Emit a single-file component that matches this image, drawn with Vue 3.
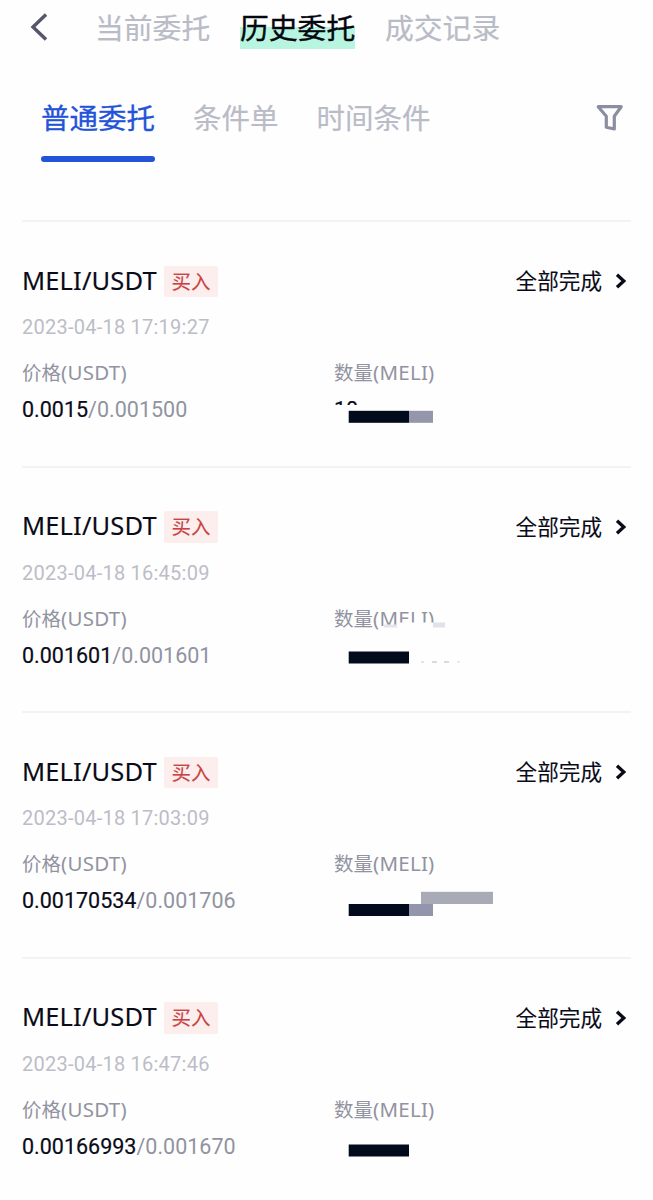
<script setup>
import { ref } from "vue";

const mainTabs = ["当前委托", "历史委托", "成交记录"];
const subTabs = ["普通委托", "条件单", "时间条件"];
const activeMain = ref(1);
const activeSub = ref(0);

// masks: blocks that cover the private amount, relative to the quantity cell
const orders = [
  {
    time: "2023-04-18 17:19:27",
    price: "0.0015",
    avg: "0.001500",
    amount: "10",
    masks: [
      { x: 0, y: 46, w: 110, h: 24, color: "#fefefe" },
      { x: 14.7, y: 51.8, w: 60.3, h: 12, color: "#020b1c" },
      { x: 75, y: 51.8, w: 24, h: 12, color: "#9496ac" },
    ],
  },
  {
    time: "2023-04-18 16:45:09",
    price: "0.001601",
    avg: "0.001601",
    amount: "",
    masks: [
      { x: 50, y: 19.5, w: 13, h: 3, color: "#e4e5ec" },
      { x: 63, y: 17.5, w: 36, h: 8, color: "#fefefe" },
      { x: 99, y: 17.5, w: 12, h: 5, color: "#e0e1e9" },
      { x: 14.7, y: 46.5, w: 60.3, h: 12, color: "#020b1c" },
      { x: 87, y: 56.5, w: 3, h: 1, color: "#c9cad0" },
      { x: 98, y: 56.5, w: 5, h: 1, color: "#b4b5bd" },
      { x: 110, y: 56.5, w: 5, h: 1, color: "#b4b5bd" },
      { x: 123, y: 56.5, w: 3, h: 1, color: "#d4d5da" },
    ],
  },
  {
    time: "2023-04-18 17:03:09",
    price: "0.00170534",
    avg: "0.001706",
    amount: "",
    masks: [
      { x: 87, y: 41.8, w: 72, h: 12.2, color: "#a8aab5" },
      { x: 14.7, y: 54, w: 60.3, h: 12, color: "#020b1c" },
      { x: 75, y: 54, w: 24, h: 12, color: "#9395ad" },
    ],
  },
  {
    time: "2023-04-18 16:47:46",
    price: "0.00166993",
    avg: "0.001670",
    amount: "",
    masks: [{ x: 14.7, y: 48.5, w: 60.3, h: 12, color: "#020b1c" }],
  },
];
</script>

<template>
  <div class="page">
    <header class="header">
      <svg class="back" width="18" height="28" viewBox="0 0 18 28">
        <path d="M17 1.5 L4 14 L17 26.5" />
      </svg>
      <nav class="main-tabs">
        <span
          v-for="(tab, i) in mainTabs"
          :key="tab"
          class="main-tab"
          :class="{ active: activeMain === i }"
          @click="activeMain = i"
          >{{ tab }}</span
        >
      </nav>
    </header>

    <div class="sub-header">
      <nav class="sub-tabs">
        <span
          v-for="(tab, i) in subTabs"
          :key="tab"
          class="sub-tab"
          :class="{ active: activeSub === i }"
          @click="activeSub = i"
          >{{ tab }}<i class="line" v-if="activeSub === i"></i
        ></span>
      </nav>
      <svg class="filter" width="28" height="28" viewBox="0 0 28 28">
        <path d="M3.2 2.7 H26.2 L19.3 12.2 V25 L11.3 23.3 V12.2 Z" />
      </svg>
    </div>

    <div class="list">
      <div class="order" v-for="order in orders" :key="order.time">
        <div class="title">
          <span class="pair">MELI/USDT</span>
          <span class="tag">买入</span>
          <span class="status">全部完成</span>
          <svg class="arrow" width="12" height="16" viewBox="0 0 12 16">
            <path d="M2 1.7 L8.8 8 L2 14.3" />
          </svg>
        </div>
        <div class="time">{{ order.time }}</div>
        <div class="cells">
          <div class="cell">
            <div class="label">价格<span class="unit">(USDT)</span></div>
            <div class="value">
              {{ order.price }}<span class="avg">/{{ order.avg }}</span>
            </div>
          </div>
          <div class="cell">
            <div class="label">数量<span class="unit">(MELI)</span></div>
            <div class="value">{{ order.amount }}</div>
            <svg class="masks" width="170" height="72">
              <rect
                v-for="(m, i) in order.masks"
                :key="i"
                :x="m.x"
                :y="m.y"
                :width="m.w"
                :height="m.h"
                :fill="m.color"
              />
            </svg>
          </div>
        </div>
      </div>
    </div>
  </div>
</template>

<style>
body {
  background: #fefefe;
}
</style>

<style scoped>
.page {
  box-sizing: border-box;
  width: 653px;
  height: 1200px;
  overflow: hidden;
  background: #fefefe;
  color: #0a0b18;
  font-family: "Noto Sans", "Noto Sans CJK SC", sans-serif;
}

.header {
  display: flex;
  align-items: center;
  height: 54px;
  padding-left: 29px;
}

.back {
  fill: none;
  stroke: #55566a;
  stroke-width: 3.4;
}

.main-tabs {
  display: flex;
  gap: 29.8px;
  margin-left: 48px;
  font-family: "Noto Sans CJK SC", sans-serif;
}

.main-tab {
  font-size: 28.8px;
  line-height: 44px;
  color: #b9bbc7;
  -webkit-text-stroke: 0.2px;
}

.main-tab.active {
  color: #05070f;
  background: linear-gradient(#b8f5e1, #b8f5e1) 0 100% / 100% 22px no-repeat;
  -webkit-text-stroke: 0.4px;
}

.sub-header {
  display: flex;
  justify-content: space-between;
  height: 166px;
  padding: 0 30px 0 41px;
}

.sub-tabs {
  display: flex;
  gap: 38px;
  margin-top: 41px;
  font-family: "Noto Sans CJK SC", sans-serif;
}

.sub-tab {
  font-size: 28.5px;
  line-height: 44px;
  color: #b9bbc7;
  -webkit-text-stroke: 0.2px;
}

.sub-tab.active {
  color: #2353d8;
  -webkit-text-stroke: 0.3px;
}

.line {
  display: block;
  height: 5.5px;
  margin-top: 17px;
  background: #2353d8;
  border-radius: 3px;
}

.filter {
  margin-top: 50px;
  fill: none;
  stroke: #8b8ea0;
  stroke-width: 3.2;
  stroke-linejoin: round;
}

.list {
  padding: 0 22px;
}

.order {
  box-sizing: border-box;
  height: 245.5px;
  padding-top: 43.5px;
  border-top: 2px solid #f3f3f4;
}

.title {
  display: flex;
  align-items: center;
  height: 31.5px;
}

.pair {
  width: 142px;
  font-size: 25.5px;
  line-height: 30px;
  padding-bottom: 3px;
  letter-spacing: 0.15px;
  white-space: nowrap;
  -webkit-text-stroke: 0.15px;
}

.tag {
  width: 54px;
  height: 31.5px;
  font-family: "Noto Sans CJK SC", sans-serif;
  font-size: 19.5px;
  line-height: 30px;
  text-align: center;
  color: #c94345;
  background: #fceeed;
  border-radius: 2px;
  -webkit-text-stroke: 0.1px;
}

.status {
  margin-left: auto;
  padding-bottom: 2px;
  font-family: "Noto Sans CJK SC", sans-serif;
  font-size: 21.6px;
  line-height: 30px;
  -webkit-text-stroke: 0.1px;
}

.arrow {
  margin: 0 4px 0 13px;
  fill: none;
  stroke: #0a0b18;
  stroke-width: 3.3;
}

.time {
  margin-top: 16px;
  font-family: Roboto, sans-serif;
  font-size: 20px;
  line-height: 28px;
  letter-spacing: 0.24px;
  color: #bcbdc7;
}

.cells {
  display: flex;
  margin-top: 18px;
}

.cell {
  position: relative;
  flex: none;
  width: 312px;
}

.label {
  height: 28px;
  font-family: "Noto Sans CJK SC", sans-serif;
  font-size: 19.5px;
  line-height: 26px;
  color: #9193a0;
}

.unit {
  font-family: "Noto Sans", sans-serif;
  font-size: 20.5px;
  letter-spacing: 0.25px;
}

.value {
  height: 28px;
  margin-top: 8px;
  font-family: Roboto, sans-serif;
  font-size: 21.5px;
  line-height: 30px;
  -webkit-text-stroke: 0.2px;
}

.avg {
  -webkit-text-stroke: 0;
  color: #9193a0;
}

.masks {
  position: absolute;
  top: 0;
  left: 0;
}
</style>
